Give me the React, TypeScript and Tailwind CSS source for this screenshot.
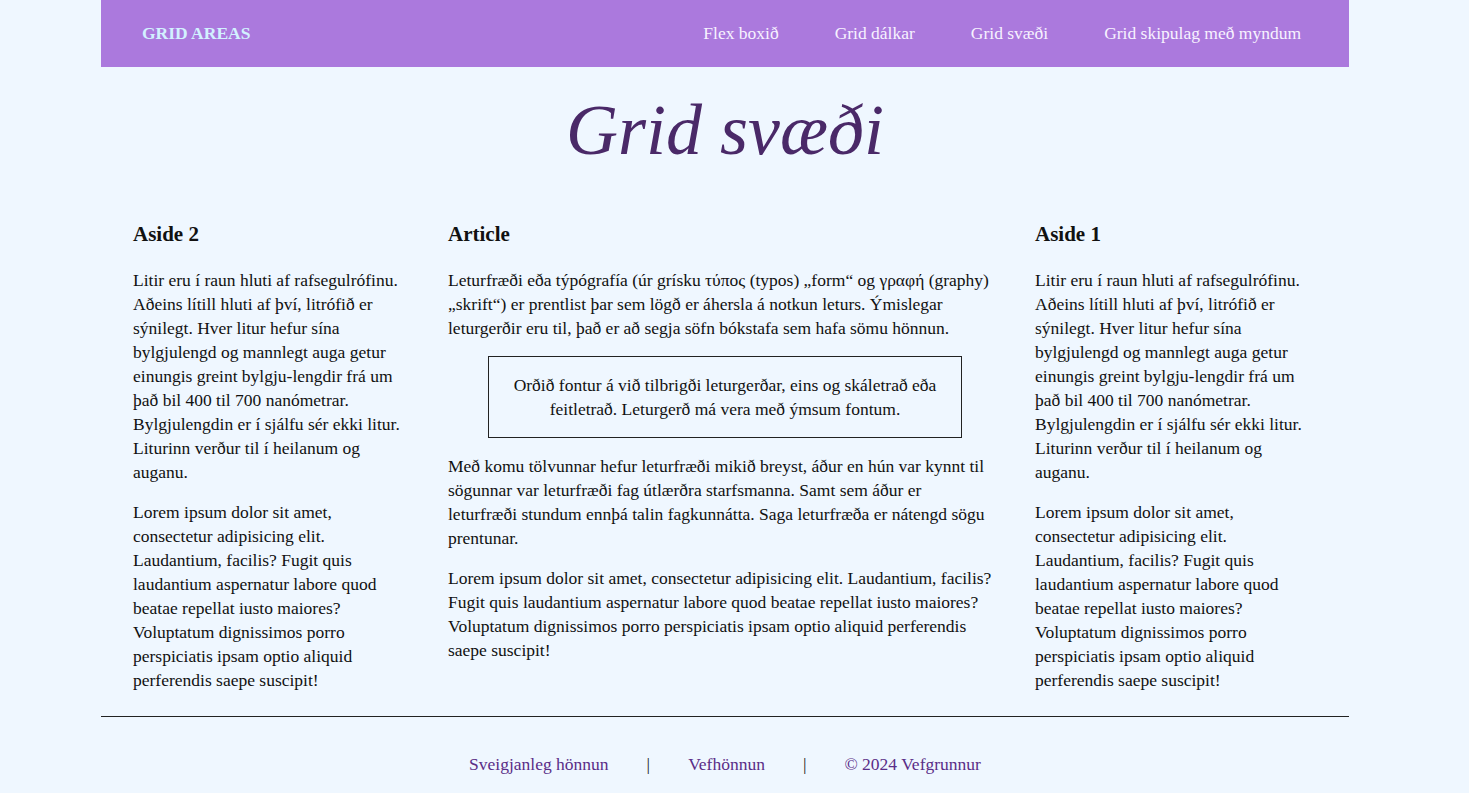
const serif = "font-['Liberation_Serif','Times_New_Roman',serif]";

const navLinks = ["Flex boxið", "Grid dálkar", "Grid svæði", "Grid skipulag með myndum"];

const asideParagraphs = [
  "Litir eru í raun hluti af rafsegulrófinu. Aðeins lítill hluti af því, litrófið er sýnilegt. Hver litur hefur sína bylgjulengd og mannlegt auga getur einungis greint bylgju-lengdir frá um það bil 400 til 700 nanómetrar. Bylgjulengdin er í sjálfu sér ekki litur. Liturinn verður til í heilanum og auganu.",
  "Lorem ipsum dolor sit amet, consectetur adipisicing elit. Laudantium, facilis? Fugit quis laudantium aspernatur labore quod beatae repellat iusto maiores? Voluptatum dignissimos porro perspiciatis ipsam optio aliquid perferendis saepe suscipit!",
];

function Aside({ title }: { title: string }) {
  return (
    <aside>
      <h2 className="mb-[20px] text-[21px] font-bold leading-[28px]">{title}</h2>
      {asideParagraphs.map((p, i) => (
        <p key={i} className="mb-[16px] text-[17.5px] leading-[24px]">
          {p}
        </p>
      ))}
    </aside>
  );
}

export default function App() {
  return (
    <div className={`min-h-screen bg-[#eff7ff] text-[#111] ${serif}`}>
      <div className="ml-[101px] w-[1248px]">
        {/* header */}
        <nav className="flex h-[67px] items-center justify-between bg-[#ab79dd] pl-[41px] pr-[48px]">
          <a className="text-[17.5px] font-bold uppercase text-[#d2f1ff]">Grid Areas</a>
          <ul className="flex gap-[56px]">
            {navLinks.map((link) => (
              <li key={link} className="text-[17.5px] text-[#f7f2ff]">
                {link}
              </li>
            ))}
          </ul>
        </nav>

        <h1 className="mt-[20px] text-center text-[72px] italic leading-[86px] text-[#4a2968]">
          Grid svæði
        </h1>

        <main className="mt-[47px] grid grid-cols-[276px_548px_276px] gap-x-[39px] px-[32px] pb-[8px]">
          <Aside title="Aside 2" />

          <article>
            <h2 className="mb-[20px] text-[21px] font-bold leading-[28px]">Article</h2>
            <p className="mb-[16px] text-[17.5px] leading-[24px]">
              Leturfræði eða týpógrafía (úr grísku τύπος (typos) „form“ og γραφή (graphy) „skrift“) er prentlist þar sem
              lögð er áhersla á notkun leturs. Ýmislegar leturgerðir eru til, það er að segja söfn bókstafa sem hafa
              sömu hönnun.
            </p>
            <blockquote className="mb-[16px] ml-[40px] w-[474px] border border-[#222] px-[20px] py-[16px] text-center text-[17.5px] leading-[24px]">
              Orðið fontur á við tilbrigði leturgerðar, eins og skáletrað eða feitletrað. Leturgerð má vera með ýmsum
              fontum.
            </blockquote>
            <p className="mb-[16px] text-[17.5px] leading-[24px]">
              Með komu tölvunnar hefur leturfræði mikið breyst, áður en hún var kynnt til
              <br />
              sögunnar var leturfræði fag útlærðra starfsmanna. Samt sem áður er
              <br />
              leturfræði stundum ennþá talin fagkunnátta. Saga leturfræða er nátengd sögu
              <br />
              prentunar.
            </p>
            <p className="mb-[16px] text-[17.5px] leading-[24px]">{asideParagraphs[1]}</p>
          </article>

          <Aside title="Aside 1" />
        </main>

        <footer className="border-t border-[#222] pt-[35px] pb-[30px]">
          <ul className="flex items-center justify-center gap-[38px] text-[17.5px] leading-[24px] text-[#5a2d87]">
            <li>Sveigjanleg hönnun</li>
            <li className="text-[#222]">|</li>
            <li>Vefhönnun</li>
            <li className="text-[#222]">|</li>
            <li>© 2024 Vefgrunnur</li>
          </ul>
        </footer>
      </div>
    </div>
  );
}
